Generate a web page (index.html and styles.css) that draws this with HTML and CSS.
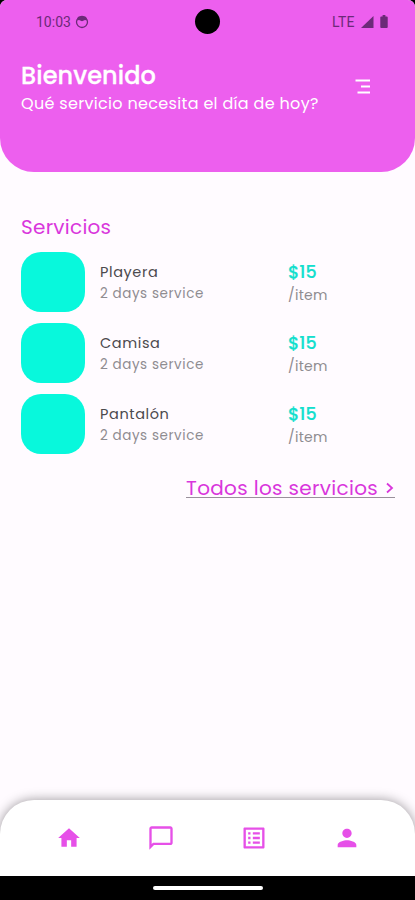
FILE: index.html
```
<!DOCTYPE html>
<html lang="es">
  <head>
    <meta charset="utf-8">
    <title>Servicios</title>
    <link rel="stylesheet" href="styles.css">
  </head>
  <body>
    <div class="screen">
      <div class="header">
        <div class="statusbar">
          <span class="time">10:03</span>
          <svg class="app-icon" width="14" height="14" viewBox="0 0 14 14">
            <circle cx="7" cy="7" r="5.500" fill="none" stroke="currentColor" stroke-width="1.300"/>
            <path d="M3 1.800h8l1 3.700-2-.6-3 1.300-3-1.300-2 .6z" fill="currentColor"/>
          </svg>
          <span class="camera"></span>
          <span class="lte">LTE</span>
          <svg class="signal" width="13" height="12" viewBox="0 0 13 12"><path d="M0 12 12.500 0v12z" fill="currentColor"/></svg>
          <svg class="battery" width="8" height="13" viewBox="0 0 8 14"><path d="M2.500 0h3v1.500H7q1 0 1 1V13q0 1-1 1H1q-1 0-1-1V2.500q0-1 1-1h1.500z" fill="currentColor"/></svg>
        </div>
        <div class="welcome">
          <div>
            <h1 class="title">Bienvenido</h1>
            <p class="subtitle">Qué servicio necesita el día de hoy?</p>
          </div>
          <svg class="menu" width="16" height="16" viewBox="0 0 16 16"><path d="M.5 1.500H15M6 7.500h9M2.500 13.500H15" stroke="#fff" stroke-width="2.200"/></svg>
        </div>
      </div>

      <div class="content">
        <h2 class="section">Servicios</h2>
        <div class="services">
          <div class="service">
            <div class="thumb"></div>
            <div class="info">
              <div class="name">Playera</div>
              <div class="days">2 days service</div>
            </div>
            <div class="cost">
              <div class="price">$15</div>
              <div class="unit">/item</div>
            </div>
          </div>
          <div class="service">
            <div class="thumb"></div>
            <div class="info">
              <div class="name">Camisa</div>
              <div class="days">2 days service</div>
            </div>
            <div class="cost">
              <div class="price">$15</div>
              <div class="unit">/item</div>
            </div>
          </div>
          <div class="service">
            <div class="thumb"></div>
            <div class="info">
              <div class="name">Pantalón</div>
              <div class="days">2 days service</div>
            </div>
            <div class="cost">
              <div class="price">$15</div>
              <div class="unit">/item</div>
            </div>
          </div>
        </div>
        <a class="all">
          <span>Todos los servicios</span>
          <svg width="8" height="12" viewBox="0 0 8 12"><path d="M1 1.500 6 6 1 10.500" fill="none" stroke="currentColor" stroke-width="1.800"/></svg>
        </a>
      </div>

      <div class="tabs">
        <svg width="26" height="26" viewBox="0 0 24 24"><path d="M10 20v-6h4v6h5v-8h3L12 3 2 12h3v8z"/></svg>
        <svg width="28" height="28" viewBox="0 0 24 24"><path d="M20 2H4c-1.100 0-2 .9-2 2v18l4-4h14c1.100 0 2-.9 2-2V4c0-1.100-.9-2-2-2zm0 14H5.200L4 17.200V4h16z"/></svg>
        <svg width="28" height="28" viewBox="0 0 24 24"><path d="M19 5v14H5V5h14m1.100-2H3.900c-.5 0-.9.4-.9.9v16.200c0 .4.4.9.9.9h16.200c.4 0 .9-.5.9-.9V3.900c0-.5-.5-.9-.9-.9zM11 7h6v2h-6V7zm0 4h6v2h-6v-2zm0 4h6v2h-6zM7 7h2v2H7zm0 4h2v2H7zm0 4h2v2H7z"/></svg>
        <svg width="28" height="28" viewBox="0 0 24 24"><path d="M12 12c2.210 0 4-1.790 4-4s-1.790-4-4-4-4 1.790-4 4 1.790 4 4 4zm0 2c-2.670 0-8 1.340-8 4v2h16v-2c0-2.660-5.330-4-8-4z"/></svg>
      </div>
      <div class="system"><div class="pill"></div></div>
    </div>
  </body>
</html>
```
FILE: styles.css
```
* {
  box-sizing: border-box;
  margin: 0;
  padding: 0;
}
body {
  background: #000;
  font-family: Poppins, Inter, sans-serif;
}
svg {
  display: block;
  flex: none;
}
.screen {
  display: flex;
  flex-direction: column;
  width: 415px;
  height: 900px;
  overflow: hidden;
  background: #fffbff;
  border-radius: 7px 7px 0 0;
}

/* header */
.header {
  height: 171.5px;
  background: #ed5fee;
  border-radius: 0 0 34px 34px;
}
.statusbar {
  display: flex;
  align-items: center;
  height: 43px;
  padding: 0 27px 0 36px;
  color: #6c2a78;
  font-family: Roboto, sans-serif;
  font-size: 14px;
}
.time {
  width: 39px;
}
.camera {
  width: 25px;
  height: 25px;
  margin-left: 106px;
  border-radius: 50%;
  background: #000;
}
.lte {
  width: 29px;
  margin-left: 112px;
  letter-spacing: .3px;
}
.battery {
  margin-left: 6px;
}
.welcome {
  display: flex;
  justify-content: space-between;
  padding: 17px 44px 0 21px;
  color: #fff;
}
.title {
  font-size: 24px;
  font-weight: 500;
  line-height: 31px;
  letter-spacing: .1px;
  -webkit-text-stroke: .3px #fff;
}
.subtitle {
  padding-top: 1px;
  font-size: 16px;
  line-height: 24px;
  letter-spacing: .32px;
  white-space: nowrap;
}
.menu {
  margin-top: 19px;
}

/* services */
.content {
  flex: 1;
  padding: 41.5px 20px 0 21px;
}
.section {
  color: #d936dc;
  font-size: 20px;
  font-weight: 400;
  line-height: 28px;
  letter-spacing: .25px;
}
.services {
  display: flex;
  flex-direction: column;
  gap: 10.6px;
  margin-top: 11.2px;
}
.service {
  display: flex;
  height: 60.2px;
}
.thumb {
  width: 64px;
  border-radius: 20px;
  background: #08f8dc;
}
.info {
  width: 188px;
  margin-left: 15px;
  padding-top: 10.2px;
}
.name {
  color: #4c4a4e;
  font-size: 14.5px;
  line-height: 21px;
  letter-spacing: .6px;
}
.days {
  color: #8f8c91;
  font-size: 13.5px;
  line-height: 21px;
  letter-spacing: .58px;
}
.price {
  padding-top: 8px;
  color: #13dfcd;
  font-size: 17.5px;
  font-weight: 500;
  line-height: 24px;
  -webkit-text-stroke: .2px #13dfcd;
}
.unit {
  color: #8f8c91;
  font-size: 14px;
  line-height: 23px;
  letter-spacing: .3px;
}
.all {
  display: flex;
  align-items: center;
  justify-content: space-between;
  width: 209px;
  height: 19px;
  margin: 25.5px 0 0 auto;
  padding-right: 1px;
  border-bottom: 1px solid #99909b;
  color: #d936dc;
  font-size: 20px;
  letter-spacing: .32px;
}

/* bottom tabs */
.tabs {
  display: flex;
  align-items: center;
  justify-content: space-between;
  height: 76px;
  padding: 0 54px 0 56px;
  border-radius: 34px 34px 0 0;
  background: #fff;
  box-shadow: 0 0 12px rgba(0, 0, 0, .4);
  fill: #e650e8;
}
.system {
  height: 24px;
  padding-top: 10px;
  background: #000;
}
.pill {
  width: 110px;
  height: 4px;
  margin: 0 auto;
  border-radius: 2px;
  background: #fff;
}
```
